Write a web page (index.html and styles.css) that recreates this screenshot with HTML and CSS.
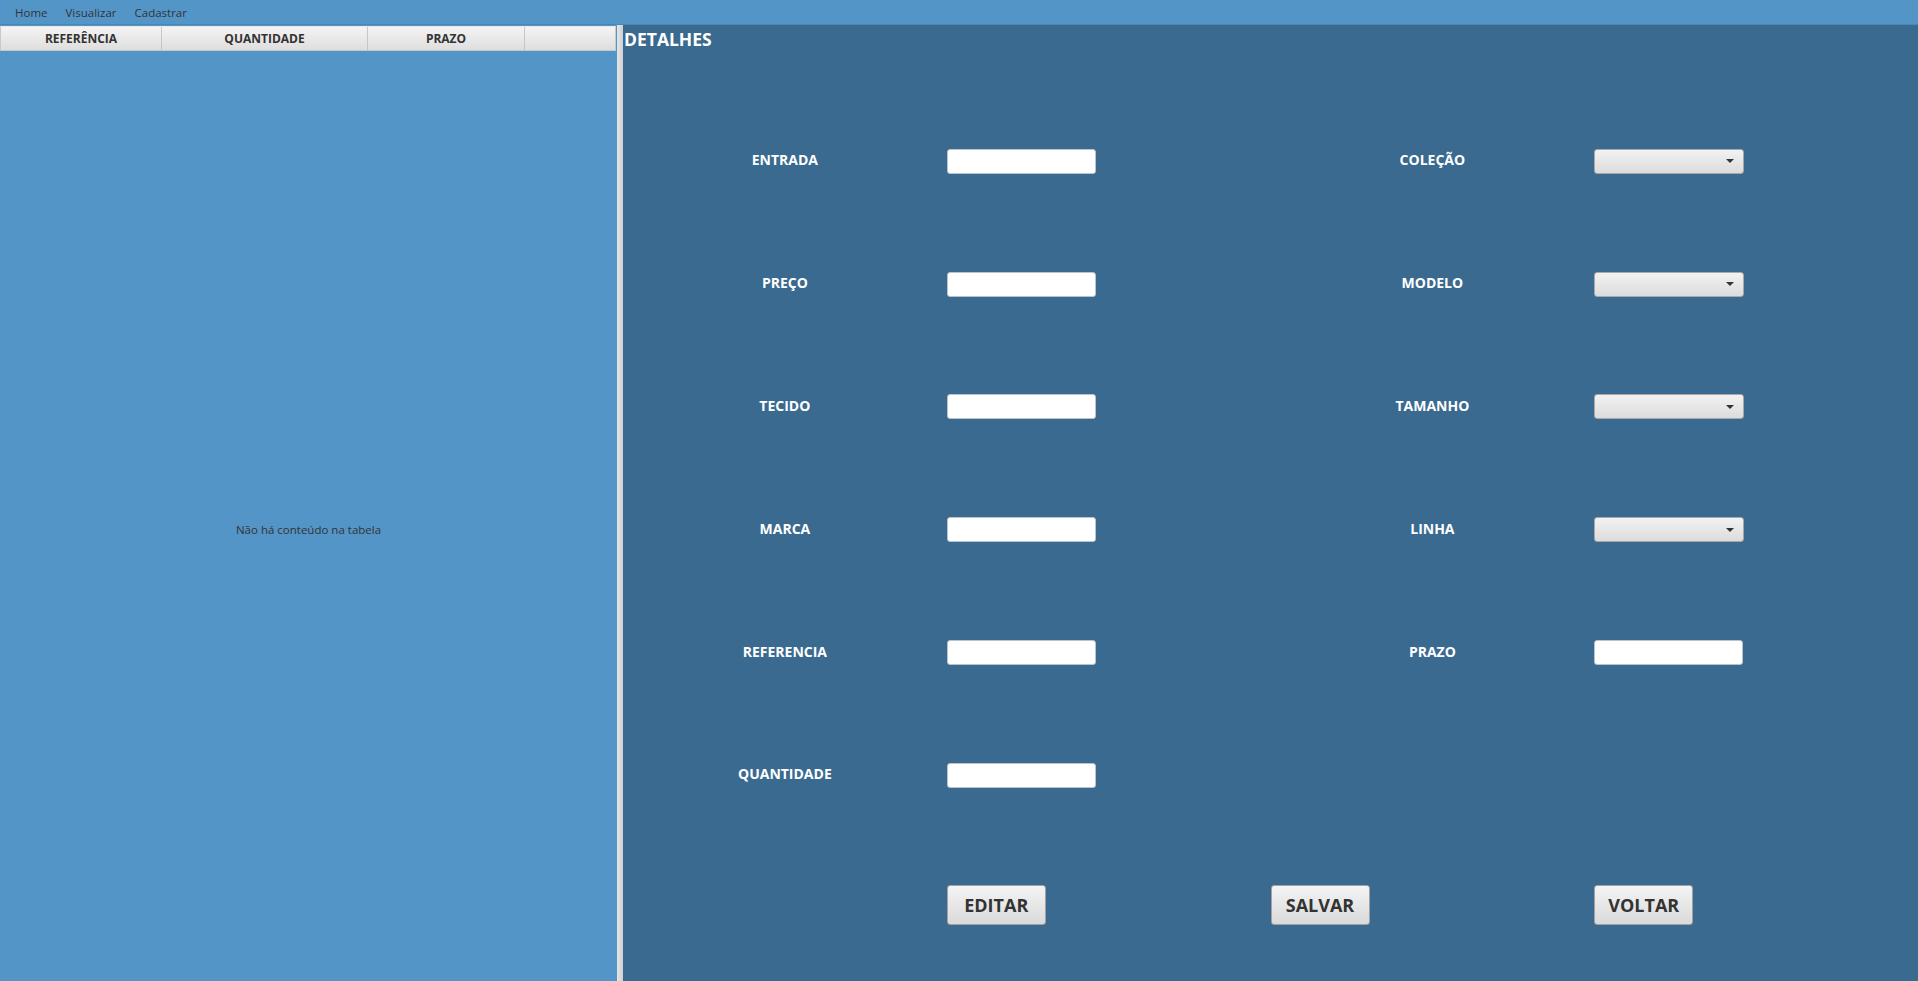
FILE: index.html
```html
<!DOCTYPE html>
<html lang="pt">
<head>
<meta charset="utf-8">
<title>Detalhes</title>
<link rel="stylesheet" href="styles.css">
</head>
<body>
<div class="menubar">
  <span class="menu-item">Home</span>
  <span class="menu-item">Visualizar</span>
  <span class="menu-item">Cadastrar</span>
</div>
<div class="main">
  <div class="left">
    <div class="table-header">
      <div class="th th-ref">REFERÊNCIA</div>
      <div class="th th-qtd">QUANTIDADE</div>
      <div class="th th-prazo">PRAZO</div>
      <div class="th th-fill"></div>
    </div>
    <div class="table-body">
      <span class="empty">Não há conteúdo na tabela</span>
    </div>
  </div>
  <div class="divider"></div>
  <div class="right">
    <div class="title">DETALHES</div>
    <div class="form">
      <div class="label">ENTRADA</div>
      <div class="cell"><div class="field"></div></div>
      <div class="label">COLEÇÃO</div>
      <div class="cell"><div class="combo"><span class="arrow"></span></div></div>

      <div class="label">PREÇO</div>
      <div class="cell"><div class="field"></div></div>
      <div class="label">MODELO</div>
      <div class="cell"><div class="combo"><span class="arrow"></span></div></div>

      <div class="label">TECIDO</div>
      <div class="cell"><div class="field"></div></div>
      <div class="label">TAMANHO</div>
      <div class="cell"><div class="combo"><span class="arrow"></span></div></div>

      <div class="label">MARCA</div>
      <div class="cell"><div class="field"></div></div>
      <div class="label">LINHA</div>
      <div class="cell"><div class="combo"><span class="arrow"></span></div></div>

      <div class="label">REFERENCIA</div>
      <div class="cell"><div class="field"></div></div>
      <div class="label">PRAZO</div>
      <div class="cell"><div class="field"></div></div>

      <div class="label">QUANTIDADE</div>
      <div class="cell"><div class="field"></div></div>
      <div class="label"></div>
      <div class="cell"></div>

      <div class="label"></div>
      <div class="cell btn-cell"><button class="btn">EDITAR</button></div>
      <div class="cell btn-cell"><button class="btn">SALVAR</button></div>
      <div class="cell btn-cell"><button class="btn">VOLTAR</button></div>
    </div>
  </div>
</div>
</body>
</html>
```
FILE: styles.css
```css
html, body {
  margin: 0;
  padding: 0;
  width: 1918px;
  height: 981px;
  overflow: hidden;
  font-family: "Open Sans", "Noto Sans", sans-serif;
}
body {
  background: #5495c8;
}
.menubar {
  height: 25px;
  box-sizing: border-box;
  background: #5495c8;
  border-bottom: 1px solid #4a86b6;
  display: flex;
  align-items: center;
  padding-left: 15px;
  gap: 18px;
  font-size: 11.5px;
  color: #333;
}
.main {
  display: flex;
  height: 956px;
}
.left {
  width: 617px;
  display: flex;
  flex-direction: column;
  background: #5495c8;
}
.table-header {
  display: flex;
  height: 25px;
  box-sizing: border-box;
  margin-top: 1px;
  margin-right: 1px;
  border: 1px solid #c8c8c8;
  border-top-color: #e8e8e8;
  background: linear-gradient(#f4f4f4, #dedede);
}
.th {
  display: flex;
  align-items: center;
  justify-content: center;
  font-size: 12px;
  font-weight: 700;
  color: #333;
  border-right: 1px solid #c6c6c6;
  box-sizing: border-box;
}
.th-ref { width: 161px; }
.th-qtd { width: 206px; }
.th-prazo { width: 157px; }
.th-fill { flex: 1; border-right: none; }
.table-body {
  flex: 1;
  display: flex;
  align-items: center;
  justify-content: center;
  padding-top: 26px;
}
.empty {
  font-size: 11.5px;
  color: #333;
}
.divider {
  width: 6px;
  background: linear-gradient(90deg, #e6e6e6, #d0d0d0);
}
.right {
  flex: 1;
  background: #3a6a8f;
  padding-top: 4px;
  box-sizing: border-box;
}
.title {
  height: 20px;
  line-height: 20px;
  padding-left: 1px;
  font-size: 17.5px;
  font-weight: 700;
  color: #fff;
}
.form {
  margin-top: 51px;
  display: grid;
  grid-template-columns: repeat(4, 1fr);
  grid-auto-rows: 122.8px;
}
.label {
  align-self: center;
  text-align: center;
  font-size: 14px;
  font-weight: 700;
  color: #fff;
  margin-top: -3px;
}
.cell {
  align-self: center;
  display: flex;
}
.btn-cell {
  margin-top: 14px;
}
.field {
  width: 149px;
  height: 25px;
  box-sizing: border-box;
  background: #fff;
  border: 1px solid #b9c3cc;
  border-radius: 3px;
}
.combo {
  width: 150px;
  height: 25px;
  box-sizing: border-box;
  background: linear-gradient(#f2f2f2, #dcdcdc);
  border: 1px solid #a9a9a9;
  border-radius: 3px;
  display: flex;
  align-items: center;
  justify-content: flex-end;
  padding-right: 9px;
}
.arrow {
  width: 0;
  height: 0;
  border-left: 4px solid transparent;
  border-right: 4px solid transparent;
  border-top: 4px solid #333;
}
.btn {
  width: 99px;
  height: 40px;
  box-sizing: border-box;
  border: 1px solid #a2a2a2;
  border-radius: 3px;
  background: linear-gradient(#f4f4f4, #dadada);
  font-family: "Open Sans", "Noto Sans", sans-serif;
  font-size: 18px;
  font-weight: 700;
  color: #333;
  padding: 0;
  cursor: pointer;
}
```
